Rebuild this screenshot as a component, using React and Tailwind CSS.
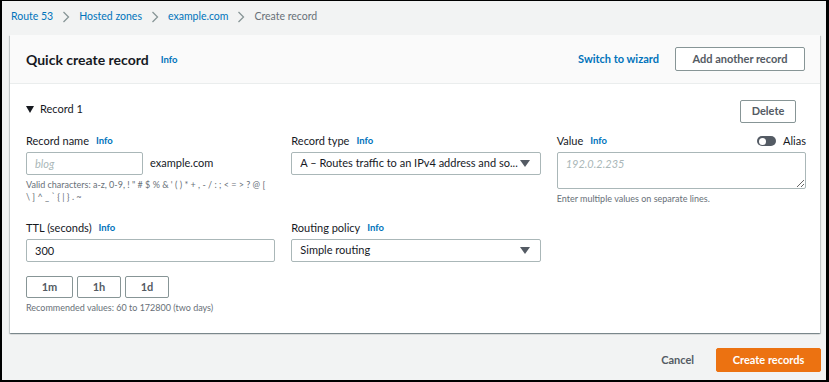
import React from "react";

function Chevron() {
  return (
    <svg width="8" height="12" viewBox="0 0 8 12" className="shrink-0">
      <path d="M1.5 1 L6.5 6 L1.5 11" fill="none" stroke="#879596" strokeWidth="1.3" />
    </svg>
  );
}

function Caret() {
  return (
    <svg width="10" height="7" viewBox="0 0 10 7" className="shrink-0">
      <path d="M0 0 H10 L5 7 Z" fill="#545b64" />
    </svg>
  );
}

function Info() {
  return <span className="text-[9.5px] font-bold text-[#0073bb] ml-[7px]">Info</span>;
}

function Label({ children }) {
  return (
    <div className="flex items-center h-[14px] text-[11px] text-[#16191f]">
      <span>{children}</span>
      <Info />
    </div>
  );
}

function Select({ text }) {
  return (
    <div className="mt-[4px] h-[23px] border border-[#aab7b8] rounded-[2px] bg-white flex items-center pl-[8px] pr-[10px] text-[11px] text-[#16191f]">
      <span className="flex-1 truncate">{text}</span>
      <Caret />
    </div>
  );
}

function SmallBtn({ children, w }) {
  return (
    <div className={`h-[22px] ${w} border border-[#879596] rounded-[2px] bg-white flex items-center justify-center text-[11px] font-bold text-[#545b64]`}>
      {children}
    </div>
  );
}

const VALID = "Valid characters: a-z, 0-9, ! \" # $ % & ' ( ) * + , - / : ; < = > ? @ [ \\ ] ^ _ ` { | } . ~";

export default function App() {
  return (
    <div className="w-[829px] h-[382px] bg-[#f2f3f3] border-black border-t border-l-2 border-r-[3px] border-b-2 overflow-hidden font-['Lato',sans-serif]">
      {/* breadcrumb */}
      <div className="h-[34px] flex items-center pl-[9px] pb-[2px] text-[10.5px]">
        <span className="text-[#0073bb]">Route 53</span>
        <span className="mx-[9px] flex"><Chevron /></span>
        <span className="text-[#0073bb]">Hosted zones</span>
        <span className="mx-[9px] flex"><Chevron /></span>
        <span className="text-[#0073bb]">example.com</span>
        <span className="mx-[9px] flex"><Chevron /></span>
        <span className="text-[#687078]">Create record</span>
      </div>

      {/* card */}
      <div className="ml-[8px] w-[810px] bg-white shadow-[0_1px_1px_0_rgba(0,28,36,0.3),1px_1px_1px_0_rgba(0,28,36,0.15),-1px_1px_1px_0_rgba(0,28,36,0.15)]">
        <div className="h-[49px] bg-[#fafafa] border-b border-[#eaeded] flex items-center pl-[16px] pr-[15px]">
          <span className="text-[14px] font-bold text-[#16191f]">Quick create record</span>
          <span className="text-[9.5px] font-bold text-[#0073bb] ml-[12px] mt-[2px]">Info</span>
          <span className="ml-auto text-[11px] font-bold text-[#0073bb]">Switch to wizard</span>
          <div className="ml-[16px] h-[24px] w-[130px] border border-[#879596] rounded-[2px] bg-white flex items-center justify-center text-[11px] font-bold text-[#545b64]">
            Add another record
          </div>
        </div>

        <div className="pl-[16px] pr-[14px] pt-[16px] pb-[19px]">
          <div className="flex items-start">
            <div className="flex items-center pt-[1px] text-[11px] text-[#16191f]">
              <svg width="8" height="7" viewBox="0 0 8 7" className="mr-[6px]">
                <path d="M0 0 H8 L4 7 Z" fill="#16191f" />
              </svg>
              Record 1
            </div>
            <div className="ml-auto mr-[10px] h-[23px] w-[56px] border border-[#879596] rounded-[2px] bg-white flex items-center justify-center text-[11px] font-bold text-[#545b64]">
              Delete
            </div>
          </div>

          <div className="mt-[11px] grid grid-cols-3 gap-x-[16px] gap-y-[16px]">
            {/* record name */}
            <div>
              <Label>Record name</Label>
              <div className="mt-[4px] flex items-center">
                <input
                  placeholder="blog"
                  readOnly
                  className="w-[117px] h-[23px] border border-[#aab7b8] rounded-[2px] px-[8px] text-[11px] outline-none placeholder:italic placeholder:text-[#aab7b8]"
                />
                <span className="ml-[7px] text-[11px] text-[#16191f]">example.com</span>
              </div>
              <div className="mt-[4px] text-[9px] leading-[12px] text-[#687078] pr-[6px]">
                {VALID}
              </div>
            </div>

            {/* record type */}
            <div>
              <Label>Record type</Label>
              <Select text="A – Routes traffic to an IPv4 address and so..." />
            </div>

            {/* value */}
            <div>
              <div className="flex items-center h-[14px] text-[11px] text-[#16191f]">
                <span>Value</span>
                <Info />
                <div className="ml-auto w-[19px] h-[10px] rounded-full bg-[#545b64] flex items-center pl-[2px]">
                  <div className="w-[7px] h-[7px] rounded-full bg-white" />
                </div>
                <span className="ml-[7px]">Alias</span>
              </div>
              <textarea
                readOnly
                placeholder="192.0.2.235"
                className="mt-[4px] block w-full h-[37px] border border-[#aab7b8] rounded-[2px] px-[8px] py-[3px] text-[11px] outline-none placeholder:italic placeholder:text-[#aab7b8]"
              />
              <div className="mt-[4px] text-[9px] leading-[12px] text-[#687078]">
                Enter multiple values on separate lines.
              </div>
            </div>

            {/* ttl */}
            <div>
              <Label>TTL (seconds)</Label>
              <input
                readOnly
                value="300"
                className="mt-[4px] block w-full h-[23px] border border-[#aab7b8] rounded-[2px] px-[8px] text-[11px] text-[#16191f] outline-none"
              />
              <div className="mt-[14px] flex gap-[4px]">
                <SmallBtn w="w-[47px]">1m</SmallBtn>
                <SmallBtn w="w-[44px]">1h</SmallBtn>
                <SmallBtn w="w-[44px]">1d</SmallBtn>
              </div>
              <div className="mt-[4px] text-[9px] leading-[12px] text-[#687078]">
                Recommended values: 60 to 172800 (two days)
              </div>
            </div>

            {/* routing */}
            <div>
              <Label>Routing policy</Label>
              <Select text="Simple routing" />
            </div>
            <div />
          </div>
        </div>
      </div>

      {/* footer */}
      <div className="mt-[15px] flex items-center justify-end pr-[5px]">
        <span className="text-[11px] font-bold text-[#545b64] mr-[22px]">Cancel</span>
        <div className="h-[24px] w-[105px] bg-[#ec7211] border border-[#ec7211] rounded-[2px] flex items-center justify-center text-[11px] font-bold text-white">
          Create records
        </div>
      </div>
    </div>
  );
}
